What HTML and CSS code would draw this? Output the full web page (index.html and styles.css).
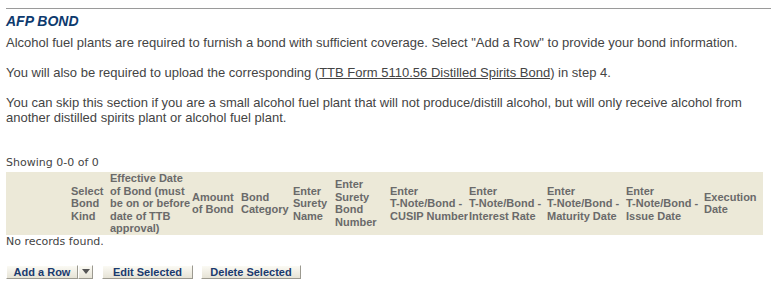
FILE: index.html
```html
<!DOCTYPE html>
<html>
<head>
<meta charset="utf-8">
<link rel="stylesheet" href="styles.css">
</head>
<body>
<div class="page">
  <div class="rule"></div>
  <h2 class="title">AFP BOND</h2>
  <p class="txt">Alcohol fuel plants are required to furnish a bond with sufficient coverage. Select "Add a Row" to provide your bond information.</p>
  <p class="txt">You will also be required to upload the corresponding (<a class="lnk" href="#">TTB Form 5110.56 Distilled Spirits Bond</a>) in step 4.</p>
  <p class="txt">You can skip this section if you are a small alcohol fuel plant that will not produce/distill alcohol, but will only receive alcohol from another distilled spirits plant or alcohol fuel plant.</p>
  <div class="showing">Showing 0-0 of 0</div>
  <table class="grid">
    <colgroup>
      <col class="c1"><col class="c2"><col class="c3"><col class="c4"><col class="c5"><col class="c6"><col class="c7"><col class="c8"><col class="c9"><col class="c10"><col class="c11"><col class="c12">
    </colgroup>
    <thead>
      <tr>
        <th></th>
        <th>Select<br>Bond<br>Kind</th>
        <th>Effective Date<br>of Bond (must<br>be on or before<br>date of TTB<br>approval)</th>
        <th>Amount<br>of Bond</th>
        <th>Bond<br>Category</th>
        <th>Enter<br>Surety<br>Name</th>
        <th>Enter<br>Surety<br>Bond<br>Number</th>
        <th>Enter<br>T-Note/Bond -<br>CUSIP Number</th>
        <th>Enter<br>T-Note/Bond -<br>Interest Rate</th>
        <th>Enter<br>T-Note/Bond -<br>Maturity Date</th>
        <th>Enter<br>T-Note/Bond -<br>Issue Date</th>
        <th>Execution<br>Date</th>
      </tr>
    </thead>
  </table>
  <div class="empty">No records found.</div>
  <div class="actions">
    <div class="split">
      <button class="btn btn-main" type="button">Add a Row</button><button class="btn btn-drop" type="button"><span class="tri"></span></button>
    </div>
    <button class="btn btn-edit" type="button">Edit Selected</button>
    <button class="btn btn-del" type="button">Delete Selected</button>
  </div>
</div>
</body>
</html>
```

FILE: styles.css
```css
html, body {
  margin: 0;
  padding: 0;
  background: #ffffff;
}
.page {
  padding: 8px 8px 0 6px;
  font-family: "Liberation Sans", Arial, sans-serif;
  color: #444444;
}
.rule {
  height: 1px;
  background: #9a9a9a;
  width: 765px;
}
.title {
  margin: 4px 0 0 0;
  font-size: 14px;
  line-height: 16px;
  font-weight: bold;
  font-style: italic;
  color: #0d3a6e;
}
.txt {
  margin: 6px 0 15px 0;
  font-size: 13px;
  line-height: 15px;
  color: #444444;
}
.txt + .txt {
  margin-top: 0;
}
.lnk {
  color: #444444;
  text-decoration: underline;
}
.showing {
  margin-top: 31px;
  font-family: "DejaVu Sans", Verdana, sans-serif;
  font-size: 11px;
  line-height: 13px;
  color: #444444;
}
.grid {
  margin-top: 3px;
  border-collapse: collapse;
  border-spacing: 0;
  table-layout: fixed;
  width: 757px;
  background: #ece9d8;
}
.grid th {
  height: 61px;
  padding: 0 0 0 1px;
  text-align: left;
  vertical-align: middle;
  font-size: 11px;
  line-height: 12.6px;
  font-weight: bold;
  color: #6a6a6a;
  white-space: nowrap;
  overflow: hidden;
}
.c1 { width: 64px; }
.c2 { width: 39px; }
.c3 { width: 82px; }
.c4 { width: 49px; }
.c5 { width: 52px; }
.c6 { width: 42px; }
.c7 { width: 55px; }
.c8 { width: 79px; }
.c9 { width: 78px; }
.c10 { width: 79px; }
.c11 { width: 78px; }
.c12 { width: 60px; }
.empty {
  font-family: "DejaVu Sans", Verdana, sans-serif;
  font-size: 11px;
  line-height: 13px;
  color: #444444;
}
.actions {
  margin-top: 17px;
  display: flex;
  align-items: center;
}
.split {
  display: flex;
  margin-right: 9px;
}
.btn {
  box-sizing: border-box;
  height: 14px;
  margin: 0;
  padding: 0;
  border: 1px solid #ffffff;
  border-right-color: #9c9a90;
  border-bottom-color: #9c9a90;
  background: linear-gradient(#fbfaf4, #e6e3d6);
  font-family: "Liberation Sans", Arial, sans-serif;
  font-size: 11px;
  line-height: 12px;
  font-weight: bold;
  color: #1a3a6e;
  cursor: pointer;
}
.btn-main {
  width: 72px;
}
.btn-drop {
  width: 15px;
  display: flex;
  align-items: center;
  justify-content: center;
}
.tri {
  width: 0;
  height: 0;
  border-left: 4px solid transparent;
  border-right: 4px solid transparent;
  border-top: 5px solid #555555;
}
.btn-edit {
  width: 91px;
  margin-right: 8px;
}
.btn-del {
  width: 100px;
}
```
